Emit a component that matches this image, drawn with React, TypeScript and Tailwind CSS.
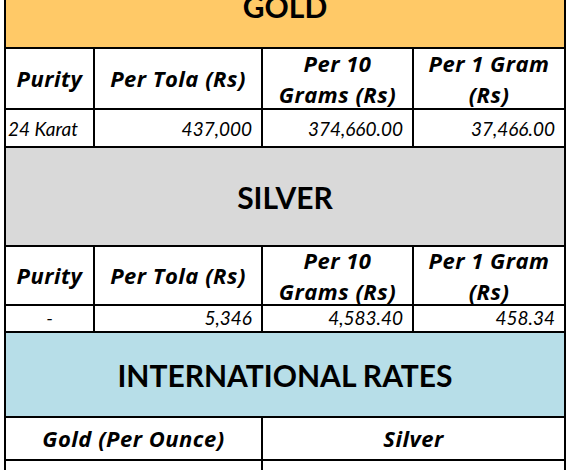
const font = { fontFamily: '"Lato", "Liberation Sans", sans-serif' }
const headFont = { fontFamily: '"Open Sans", "Liberation Sans", sans-serif' }

const Title = ({ text, bg, h }: { text: string; bg: string; h: string }) => (
  <div className={`col-span-4 flex items-center justify-center ${bg} ${h}`}>
    <span className="text-[30px] font-bold leading-none text-black">{text}</span>
  </div>
)

const Head = ({ children, h, span }: { children: React.ReactNode; h: string; span?: boolean }) => (
  <div className={`flex items-center justify-center bg-white ${h} ${span ? 'col-span-2' : ''}`}>
    <span
      className="text-center text-[22px] leading-[31px] font-bold tracking-[0.5px] whitespace-nowrap italic"
      style={headFont}
    >
      {children}
    </span>
  </div>
)

const HeadRow = ({ h }: { h: string }) => (
  <>
    <Head h={h}>Purity</Head>
    <Head h={h}>Per Tola (Rs)</Head>
    <Head h={h}>
      Per 10
      <br />
      Grams (Rs)
    </Head>
    <Head h={h}>
      Per 1 Gram
      <br />
      (Rs)
    </Head>
  </>
)

const DataRow = ({ cells, h, pb }: { cells: string[]; h: string; pb: string }) => (
  <>
    {cells.map((c, i) => (
      <div
        key={i}
        className={`flex items-end bg-white text-[19px] leading-none italic ${h} ${pb} ${
          i === 0 ? (c === '-' ? 'justify-center' : 'justify-start pl-[2px]') : 'justify-end pr-[9px]'
        }`}
      >
        {c}
      </div>
    ))}
  </>
)

export default function App() {
  return (
    <div className="h-[470px] w-[574px] overflow-hidden bg-white text-black" style={font}>
      <div className="-mt-[37px] ml-[4px] grid w-[562px] grid-cols-[87px_166px_149px_150px] gap-[2px] bg-black p-[2px]">
        <Title text="GOLD" bg="bg-[#ffc967]" h="h-[82px]" />
        <HeadRow h="h-[59px]" />
        <DataRow cells={['24 Karat', '437,000', '374,660.00', '37,466.00']} h="h-[36px]" pb="pb-[8px]" />

        <Title text="SILVER" bg="bg-[#d9d9d9]" h="h-[97px]" />
        <HeadRow h="h-[57px]" />
        <DataRow cells={['-', '5,346', '4,583.40', '458.34']} h="h-[25px]" pb="pb-[4px]" />

        <Title text="INTERNATIONAL RATES" bg="bg-[#b7dee8]" h="h-[83px]" />
        <Head h="h-[41px]" span>
          Gold (Per Ounce)
        </Head>
        <Head h="h-[41px]" span>
          Silver
        </Head>
        <div className="col-span-2 h-[36px] bg-white" />
        <div className="col-span-2 h-[36px] bg-white" />
      </div>
    </div>
  )
}
